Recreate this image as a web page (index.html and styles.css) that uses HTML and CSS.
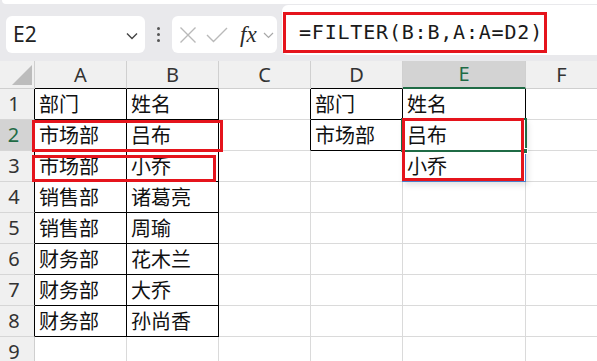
FILE: index.html
```html
<!DOCTYPE html>
<html lang="zh-CN">
<head>
<meta charset="utf-8">
<link rel="stylesheet" href="styles.css">
</head>
<body>
<div class="app">
  <div class="topbar">
    <div class="ribbon"></div>
    <div class="fbar">
      <div class="namebox">
        <span class="name">E2</span>
        <svg class="chev" width="12" height="8" viewBox="0 0 12 8"><polyline points="1,1.5 6,6.5 11,1.5" fill="none" stroke="#444" stroke-width="1.4"/></svg>
      </div>
      <div class="dots"><i></i><i></i><i></i></div>
      <div class="fxbox">
        <svg width="18" height="18" viewBox="0 0 18 18"><path d="M1.5 1.5L16.5 16.5M16.5 1.5L1.5 16.5" stroke="#b9b9b9" stroke-width="1.4" fill="none"/></svg>
        <svg class="check" width="22" height="16" viewBox="0 0 22 16"><polyline points="1,8 7.5,14.5 21,1" fill="none" stroke="#b9b9b9" stroke-width="1.4"/></svg>
        <span class="fx">fx</span>
        <svg class="chev2" width="11" height="7" viewBox="0 0 11 7"><polyline points="1,1 5.5,5.5 10,1" fill="none" stroke="#a8a8a8" stroke-width="1.2"/></svg>
      </div>
      <div class="formula">
        <div class="fbox">=FILTER(B:B,A:A=D2)</div>
      </div>
    </div>
  </div>

  <div class="sheet">
    <div class="corner"><svg width="35" height="28" viewBox="0 0 35 28"><polygon points="32,4 32,24 12,24" fill="#bcbcbc"/></svg></div>
    <div class="ch tb">A</div>
    <div class="ch tb">B</div>
    <div class="ch">C</div>
    <div class="ch tb">D</div>
    <div class="ch sel">E</div>
    <div class="ch">F</div>

    <div class="rh tl">1</div>
    <div class="c t">部门</div><div class="c t">姓名</div><div class="c tr"></div><div class="c t">部门</div><div class="c t">姓名</div><div class="c"></div>

    <div class="rh rsel">2</div>
    <div class="c t">市场部</div><div class="c t">吕布</div><div class="c tr"></div><div class="c t">市场部</div><div class="c t">吕布</div><div class="c"></div>

    <div class="rh tl">3</div>
    <div class="c t">市场部</div><div class="c t">小乔</div><div class="c"></div><div class="c"></div><div class="c">小乔</div><div class="c"></div>

    <div class="rh tl">4</div>
    <div class="c t">销售部</div><div class="c t">诸葛亮</div><div class="c"></div><div class="c"></div><div class="c"></div><div class="c"></div>

    <div class="rh tl">5</div>
    <div class="c t">销售部</div><div class="c t">周瑜</div><div class="c"></div><div class="c"></div><div class="c"></div><div class="c"></div>

    <div class="rh tl">6</div>
    <div class="c t">财务部</div><div class="c t">花木兰</div><div class="c"></div><div class="c"></div><div class="c"></div><div class="c"></div>

    <div class="rh tl">7</div>
    <div class="c t">财务部</div><div class="c t">大乔</div><div class="c"></div><div class="c"></div><div class="c"></div><div class="c"></div>

    <div class="rh tl">8</div>
    <div class="c t">财务部</div><div class="c t">孙尚香</div><div class="c"></div><div class="c"></div><div class="c"></div><div class="c"></div>

    <div class="rh">9</div>
    <div class="c"></div><div class="c"></div><div class="c"></div><div class="c"></div><div class="c"></div><div class="c"></div>
  </div>

  <div class="spill"></div>
  <div class="cursor"></div>
  <div class="handle"></div>
  <div class="mark m1"></div>
  <div class="mark m2"></div>
  <div class="mark m3"></div>
</div>
</body>
</html>
```

FILE: styles.css
```css
* { box-sizing: border-box; }
html, body { margin: 0; padding: 0; }
body {
  width: 597px;
  height: 361px;
  overflow: hidden;
  background: #e9e9ec;
  font-family: "Noto Sans", "Noto Sans CJK SC", sans-serif;
}
.app { position: relative; width: 597px; height: 361px; overflow: hidden; }

.topbar { height: 61px; }
.ribbon {
  height: 4px;
  margin-left: 2px;
  background: #ffffff;
  border-radius: 0 0 0 6px;
}
.fbar {
  display: flex;
  align-items: flex-start;
  padding-left: 6px;
}
.namebox {
  margin-top: 12px;
  width: 139px;
  height: 37px;
  background: #fff;
  border-radius: 6px;
  display: flex;
  align-items: center;
  justify-content: space-between;
  padding: 0 7px 0 7px;
}
.name { font-size: 21px; color: #222; line-height: 1; }
.chev { margin-top: 2px; }
.dots {
  width: 27px;
  height: 37px;
  margin-top: 12px;
  display: flex;
  flex-direction: column;
  align-items: center;
  justify-content: center;
  gap: 3px;
}
.dots i { display: block; width: 3px; height: 3px; border-radius: 50%; background: #555; }
.fxbox {
  margin-top: 12px;
  width: 105px;
  height: 37px;
  background: #fff;
  border-radius: 6px;
  display: flex;
  align-items: center;
  padding-left: 7px;
}
.check { margin-left: 9px; }
.fx {
  margin-left: 12px;
  font-family: "Liberation Serif", "DejaVu Serif", serif;
  font-style: italic;
  font-size: 23px;
  color: #2a2a2a;
  line-height: 1;
}
.chev2 { margin-left: 6px; margin-top: 2px; }
.formula {
  margin-left: 5px;
  margin-top: 1px;
  flex: 1;
  height: 50px;
  background: #fff;
  border-radius: 6px 0 0 6px;
  padding: 7px 0 0 1px;
}
.fbox {
  width: 264px;
  height: 41px;
  border: 3px solid #e5141c;
  padding-left: 13px;
  font-family: "DejaVu Sans Mono", "Liberation Mono", monospace;
  font-size: 20px;
  letter-spacing: 0.8px;
  line-height: 35px;
  color: #1a1a1a;
  white-space: nowrap;
}

.sheet {
  display: grid;
  grid-template-columns: 35px 92px 92px 92px 92px 123px 72px;
  grid-template-rows: 28px repeat(9, 31px);
  background: #fff;
  font-family: "Noto Sans CJK SC", "Noto Sans", sans-serif;
}
.corner, .ch, .rh {
  background: #f0f0f0;
  color: #333;
  font-family: "Noto Sans", "Noto Sans CJK SC", sans-serif;
  font-size: 20px;
}
.corner { border-right: 1px solid #cfcfcf; border-bottom: 1px solid #cfcfcf; }
.corner svg { display: block; }
.ch {
  display: flex;
  align-items: center;
  justify-content: center;
  border-right: 1px solid #d0d0d0;
  border-bottom: 1px solid #cfcfcf;
  line-height: 1;
}
.ch.tb { border-bottom-color: #000; }
.ch.sel {
  background: #d3d3d3;
  color: #1f6b45;
  border-bottom: 2px solid #1f6b45;
}
.rh {
  display: flex;
  align-items: center;
  justify-content: center;
  padding-right: 6px;
  border-right: 1px solid #cfcfcf;
  border-bottom: 1px solid #d6d6d6;
  line-height: 1;
}
.rh.tl { border-right-color: #000; }
.rh.rsel {
  background: #d3d3d3;
  color: #1f6b45;
  border-right: 2px solid #1f6b45;
}
.c {
  display: flex;
  align-items: center;
  padding-left: 4px;
  font-size: 20px;
  color: #111;
  white-space: nowrap;
  border-right: 1px solid #dadada;
  border-bottom: 1px solid #dadada;
  line-height: 1;
}
.c.t { border-right-color: #000; border-bottom-color: #000; }
.c.tr { border-right-color: #000; }

.spill {
  position: absolute;
  left: 402px; top: 119px;
  width: 124px; height: 63px;
  border: 1px solid #4a7fcb;
  box-shadow: 2px 3px 6px rgba(0,0,0,0.12);
}
.cursor {
  position: absolute;
  left: 401px; top: 118px;
  width: 126px; height: 34px;
  border: 2px solid #1f6b45;
}
.handle {
  position: absolute;
  left: 522px; top: 148px;
  width: 6px; height: 6px;
  background: #1f6b45;
  border: 1px solid #fff;
}
.mark {
  position: absolute;
  border: 3px solid #e5141c;
}
.m1 { left: 32px; top: 120px; width: 191px; height: 32px; }
.m2 { left: 32px; top: 155px; width: 184px; height: 27px; }
.m3 { left: 402px; top: 118px; width: 122px; height: 63px; }
```
